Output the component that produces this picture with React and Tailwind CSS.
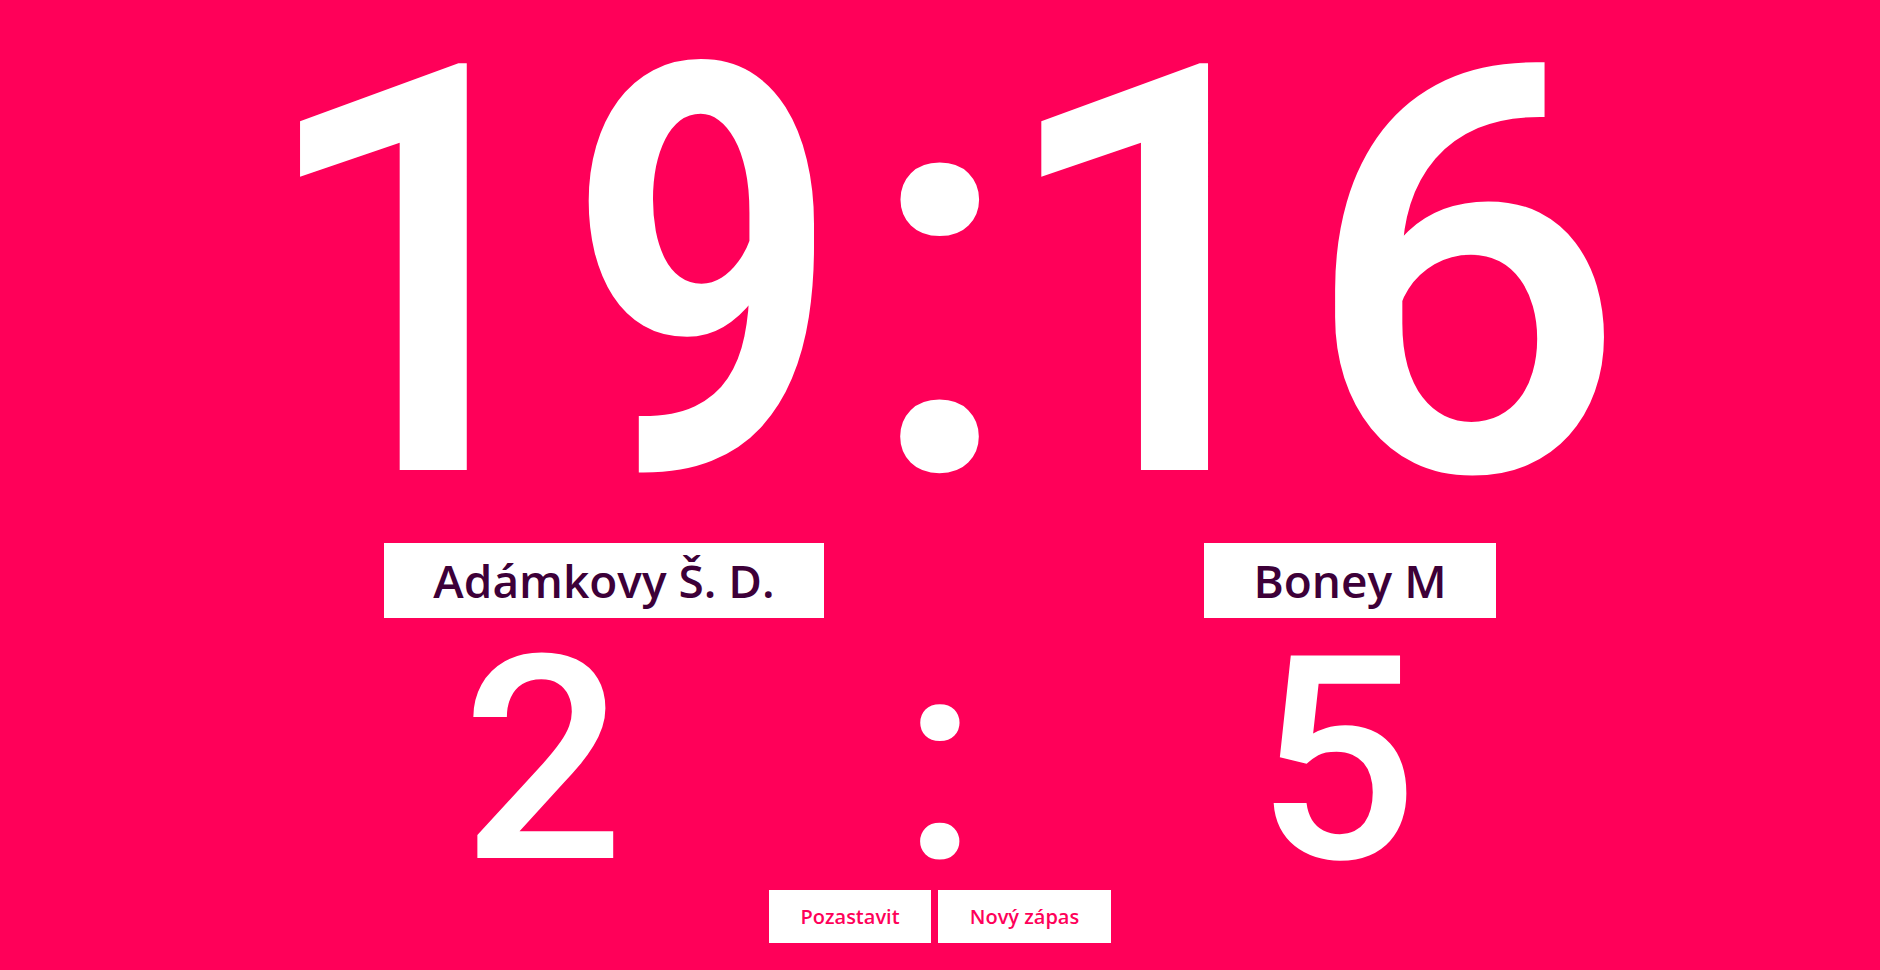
export default function App() {
  return (
    <div className="w-[1880px] h-[970px] bg-[#ff0059] overflow-hidden flex flex-col text-white">
      <div
        className="h-[543px] grid grid-cols-[1fr_auto_1fr] text-[570px] leading-[539px] pt-[6px] font-medium"
        style={{ fontFamily: 'Roboto, sans-serif' }}
      >
        <div className="text-right pr-[18px]">
          <span className="-mr-[15px]">1</span>
          <span className="font-stretch-semi-condensed">9</span>
        </div>
        <div>:</div>
        <div className="text-left -ml-[21px]">
          <span>1</span>
          <span className="-ml-[15px]">6</span>
        </div>
      </div>
      <div className="h-[75px] w-[1112px] mx-auto flex justify-between">
        <div
          className="w-[440px] h-[75px] bg-white flex items-center justify-center text-[46px] font-semibold text-[#3d0038]"
          style={{ fontFamily: '"Open Sans", sans-serif' }}
        >
          Adámkovy Š. D.
        </div>
        <div
          className="w-[292px] h-[75px] bg-white flex items-center justify-center text-[46px] font-semibold text-[#3d0038]"
          style={{ fontFamily: '"Open Sans", sans-serif' }}
        >
          Boney M
        </div>
      </div>
      <div
        className="h-[272px] w-[1112px] mx-auto grid grid-cols-[318px_1fr_318px] text-center text-[285px] leading-[250px] pt-[18px] font-medium"
        style={{ fontFamily: 'Roboto, sans-serif' }}
      >
        <div>2</div>
        <div>:</div>
        <div>5</div>
      </div>
      <div className="flex justify-center gap-[7px]">
        <button
          className="w-[162px] h-[53px] bg-white text-[#ff0059] text-[20px] font-semibold"
          style={{ fontFamily: '"Open Sans", sans-serif' }}
        >
          Pozastavit
        </button>
        <button
          className="w-[173px] h-[53px] bg-white text-[#ff0059] text-[20px] font-semibold"
          style={{ fontFamily: '"Open Sans", sans-serif' }}
        >
          Nový zápas
        </button>
      </div>
    </div>
  );
}
